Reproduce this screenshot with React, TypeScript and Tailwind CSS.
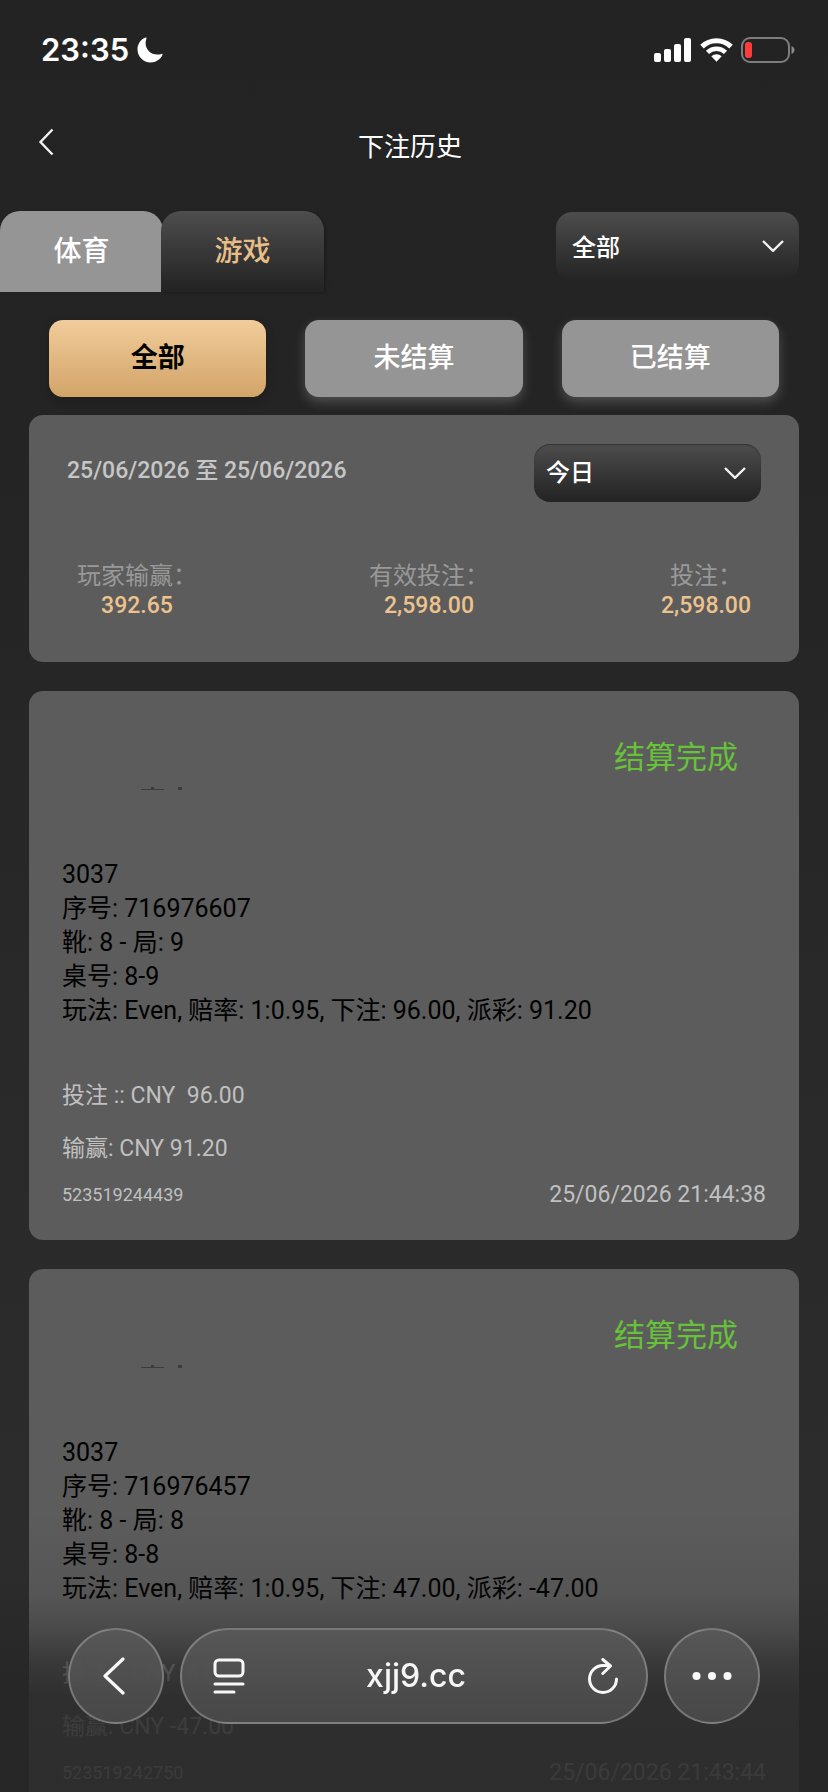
import type { ReactNode } from "react";

type BetRecord = {
  id: string;
  table: string;
  serial: string;
  shoe: string;
  round: string;
  desk: string;
  stake: string;
  payout: string;
  winLoss: string;
  time: string;
};

const records: BetRecord[] = [
  {
    id: "523519244439",
    table: "3037",
    serial: "716976607",
    shoe: "8",
    round: "9",
    desk: "8-9",
    stake: "96.00",
    payout: "91.20",
    winLoss: "91.20",
    time: "25/06/2026 21:44:38",
  },
  {
    id: "523519242750",
    table: "3037",
    serial: "716976457",
    shoe: "8",
    round: "8",
    desk: "8-8",
    stake: "47.00",
    payout: "-47.00",
    winLoss: "-47.00",
    time: "25/06/2026 21:43:44",
  },
];

const totals = [
  { label: "玩家输赢：", value: "392.65" },
  { label: "有效投注：", value: "2,598.00" },
  { label: "投注：", value: "2,598.00" },
];

function StatusBar() {
  return (
    <div className="flex h-[100px] items-center justify-between pr-[33px] pl-[41px] font-['Inter',sans-serif]">
      <div className="flex items-center gap-2">
        <span className="text-[31px] font-semibold">23:35</span>
        <svg className="h-[26px] w-[26px]" viewBox="0 0 26 26" fill="currentColor" aria-hidden="true">
          <path d="M8.6.6C3.800 2.400.5 7 .5 12.300.5 19.600 6.300 25.500 13.600 25.500c5.300 0 9.900-3.100 11.900-7.700.2-.6-.3-1.100-.9-.9-1.300.5-2.700.7-4.200.7C13.600 17.600 8.600 12.600 8.600 6c0-1.500.3-3 .9-4.400.2-.6-.3-1.200-.9-1z" />
        </svg>
      </div>
      <div className="flex items-center gap-2">
        <svg className="h-6 w-[38px]" viewBox="0 0 38 24" fill="currentColor" aria-hidden="true">
          <rect x="0" y="15" width="7" height="9" rx="2" />
          <rect x="10" y="11" width="7" height="13" rx="2" />
          <rect x="20" y="6" width="7" height="18" rx="2" />
          <rect x="30" y="0" width="7" height="24" rx="2" />
        </svg>
        <svg className="h-6 w-[33px]" viewBox="0 0 33 24" fill="none" stroke="currentColor" aria-hidden="true">
          <path d="M2 8.600C10 .8 23 .8 31 8.600" strokeWidth="5" />
          <path d="M7.500 14.300c5.100-4.800 12.900-4.800 18 0" strokeWidth="4.600" />
          <path d="M11.300 18.300c3-2.700 7.400-2.700 10.400 0L16.500 23.800z" fill="currentColor" stroke="none" />
        </svg>
        <svg className="h-[26px] w-[54px]" viewBox="0 0 54 26" fill="none" aria-hidden="true">
          <rect x="1" y="1" width="47" height="24" rx="8" stroke="#7d7d7d" strokeWidth="2" />
          <rect x="4" y="5" width="7" height="16" rx="3" fill="#ff3b3b" />
          <path d="M50.500 9c2 .8 3 2.300 3 4s-1 3.200-3 4z" fill="#8a8a8a" />
        </svg>
      </div>
    </div>
  );
}

function DropDown({
  label,
  options,
  className,
  selectClass,
}: {
  label: string;
  options: string[];
  className: string;
  selectClass: string;
}) {
  return (
    <label className={className}>
      <select
        aria-label={label}
        className={`col-start-1 row-start-1 w-full appearance-none bg-transparent text-2xl font-medium text-white outline-none ${selectClass}`}
      >
        {options.map((o) => (
          <option key={o}>{o}</option>
        ))}
      </select>
      <svg
        className="pointer-events-none col-start-1 row-start-1 mr-[15px] h-3 w-[22px] self-center justify-self-end"
        viewBox="0 0 22 12"
        fill="none"
        stroke="#f2f2f2"
        strokeWidth="2.400"
        aria-hidden="true"
      >
        <path d="M1 1l10 9.800L21 1" />
      </svg>
    </label>
  );
}

function RecordCard({ record }: { record: BetRecord }) {
  return (
    <article className="rounded-[14px] bg-[#5c5c5c] px-[33px] pb-7">
      <div className="flex h-[167px] items-start justify-between pt-[45px] pr-7">
        <svg className="mt-[51px] ml-[79px] h-[3px] w-[41px]" viewBox="0 0 41 3" fill="#3c3c3c" aria-hidden="true">
          <path d="M0 2h23v1H0zM10 0h3v2h-3zM37 0h4v3h-4z" />
        </svg>
        <p className="text-[31px] leading-[44px] text-[#67c23a]">结算完成</p>
      </div>
      <div className="text-[25px] leading-[34px] text-black">
        <p>{record.table}</p>
        <p>序号: {record.serial}</p>
        <p>
          靴: {record.shoe} - 局: {record.round}
        </p>
        <p>桌号: {record.desk}</p>
        <p>
          玩法: Even, 赔率: 1:0.95, 下注: {record.stake}, 派彩: {record.payout}
        </p>
      </div>
      <div className="mt-[51px] text-[23px] leading-[34px] text-[#c0c0c0]">
        <p className="whitespace-pre">投注 :: CNY  {record.stake}</p>
        <p className="mt-[19px]">输赢: CNY {record.winLoss}</p>
        <div className="mt-3 flex items-center justify-between">
          <span className="text-[18px]">{record.id}</span>
          <time>{record.time}</time>
        </div>
      </div>
    </article>
  );
}

function Glass({ children, className }: { children: ReactNode; className: string }) {
  return (
    <div
      className={`flex h-24 items-center rounded-full border-2 border-white/25 bg-linear-to-b from-[#595959]/90 to-[#4b4b4b]/90 backdrop-blur-[2px] ${className}`}
    >
      {children}
    </div>
  );
}

function BrowserBar() {
  return (
    <div className="pointer-events-none absolute inset-x-0 bottom-0 flex h-[280px] items-end bg-[linear-gradient(to_bottom,rgba(39,39,39,0)_0%,rgba(39,39,39,0.12)_30%,rgba(39,39,39,0.35)_42%,rgba(39,39,39,0.68)_54%,rgba(39,39,39,0.85)_66%,rgba(39,39,39,0.88)_100%)] px-[68px] pb-[68px]">
      <nav className="pointer-events-auto flex flex-1 gap-4 font-['Inter',sans-serif] text-[#f7f7f7]">
        <Glass className="w-24 justify-center">
          <button type="button" aria-label="后退" className="py-4 pr-5 pl-4">
            <svg className="h-[38px] w-[22px]" viewBox="0 0 22 38" fill="none" stroke="currentColor" strokeWidth="3.200" strokeLinecap="round" strokeLinejoin="round" aria-hidden="true">
              <path d="M20 2L2 19l18 17" />
            </svg>
          </button>
        </Glass>
        <Glass className="flex-1 justify-between pr-[27px] pl-[31px]">
          <button type="button" aria-label="页面菜单">
            <svg className="h-9 w-8" viewBox="0 0 32 36" fill="none" stroke="currentColor" strokeWidth="3" strokeLinecap="round" aria-hidden="true">
              <rect x="2" y="2" width="28" height="16" rx="4" />
              <path d="M2 26h28M2 34h19" />
            </svg>
          </button>
          <button type="button" className="text-[32px] font-medium">
            xjj9.cc
          </button>
          <button type="button" aria-label="重新加载">
            <svg className="h-9 w-8" viewBox="0 0 32 36" fill="none" stroke="currentColor" strokeWidth="3" strokeLinecap="round" strokeLinejoin="round" aria-hidden="true">
              <path d="M29.500 21A13.500 13.500 0 1 1 16 7.500h7M15.800 1.500L23.500 8l-7.700 7.500" />
            </svg>
          </button>
        </Glass>
        <Glass className="w-24 justify-center">
          <button type="button" aria-label="更多" className="p-4">
            <svg className="h-2 w-10" viewBox="0 0 40 8" fill="currentColor" aria-hidden="true">
              <circle cx="4.500" cy="4" r="4" />
              <circle cx="20" cy="4" r="4" />
              <circle cx="35.500" cy="4" r="4" />
            </svg>
          </button>
        </Glass>
      </nav>
    </div>
  );
}

export default function App() {
  return (
    <div className="relative flex h-dvh flex-col overflow-hidden bg-[linear-gradient(to_bottom,#232323_0%,#242424_25%,#2a2a2a_65%,#2c2c2c_88%,#242424_100%)] font-['Roboto','Noto_Sans_CJK_SC',sans-serif] text-white">
      <StatusBar />

      <header className="grid h-[111px] shrink-0 grid-cols-[60px_1fr_68px] items-start pt-7">
        <button type="button" aria-label="返回" className="justify-self-end pr-[6px]">
          <svg className="h-7 w-4" viewBox="0 0 16 28" fill="none" stroke="#f2f2f2" strokeWidth="2.400" aria-hidden="true">
            <path d="M14.500 1.500L2.500 14l12 12.500" />
          </svg>
        </button>
        <h1 className="text-center text-[26px] leading-[38px] font-normal">下注历史</h1>
      </header>

      <main className="min-h-0 flex-1 overflow-y-auto [scrollbar-width:none]">
        <div className="flex items-start justify-between pr-[29px]">
          <div role="tablist" className="flex">
            <button
              type="button"
              role="tab"
              aria-selected="false"
              className="h-[81px] w-[163px] rounded-t-[20px] bg-[#959595] text-[28px] font-medium"
            >
              体育
            </button>
            <button
              type="button"
              role="tab"
              aria-selected="true"
              className="-ml-0.5 h-[81px] w-[163px] rounded-t-[20px] bg-linear-to-b from-[#4e4e4e] to-[#232323] text-[28px] font-medium text-[#e7be88] shadow-[2px_1px_3px_rgba(0,0,0,0.2)]"
            >
              游戏
            </button>
          </div>
          <DropDown
            label="类别"
            options={["全部"]}
            className="mt-px grid w-[243px] rounded-2xl bg-linear-to-b from-[#4d4d4d] to-[#242424]"
            selectClass="h-[68px] px-4 pt-1"
          />
        </div>

        <div className="mt-7 grid grid-cols-3 gap-[39px] px-[49px]">
          <button
            type="button"
            className="h-[77px] rounded-[14px] bg-linear-to-b from-[#f1cc9b] to-[#d2a468] text-[27px] font-bold text-black shadow-[0_4px_10px_rgba(0,0,0,0.2)]"
          >
            全部
          </button>
          {["未结算", "已结算"].map((name) => (
            <button
              key={name}
              type="button"
              className="h-[77px] rounded-[14px] bg-[#959595] text-[27px] font-medium shadow-[0_5px_12px_rgba(255,255,255,0.2)]"
            >
              {name}
            </button>
          ))}
        </div>

        <div className="mt-[18px] flex flex-col gap-[29px] px-[29px]">
          <section className="rounded-[14px] bg-[#5c5c5c] pb-[41px]">
            <div className="flex items-start justify-between pt-[29px] pr-[38px] pl-[38px]">
              <p className="mt-[9px] text-[23px] leading-9 font-medium text-[#c6c6c6]">25/06/2026 至 25/06/2026</p>
              <DropDown
                label="日期"
                options={["今日"]}
                className="grid w-[227px] rounded-2xl bg-linear-to-b from-[#4d4d4d] to-[#232323] shadow-[inset_0_1px_1px_rgba(0,0,0,0.35)]"
                selectClass="h-[58px] px-3"
              />
            </div>
            <dl className="mt-[59px] flex justify-between px-12 text-center leading-[30px] font-medium">
              {totals.map((t) => (
                <div key={t.label}>
                  <dt className="text-[24px] font-normal text-[#999999]">{t.label}</dt>
                  <dd className="text-[23px] text-[#ecc28d]">{t.value}</dd>
                </div>
              ))}
            </dl>
          </section>

          {records.map((r) => (
            <RecordCard key={r.id} record={r} />
          ))}
        </div>
      </main>

      <BrowserBar />
    </div>
  );
}
